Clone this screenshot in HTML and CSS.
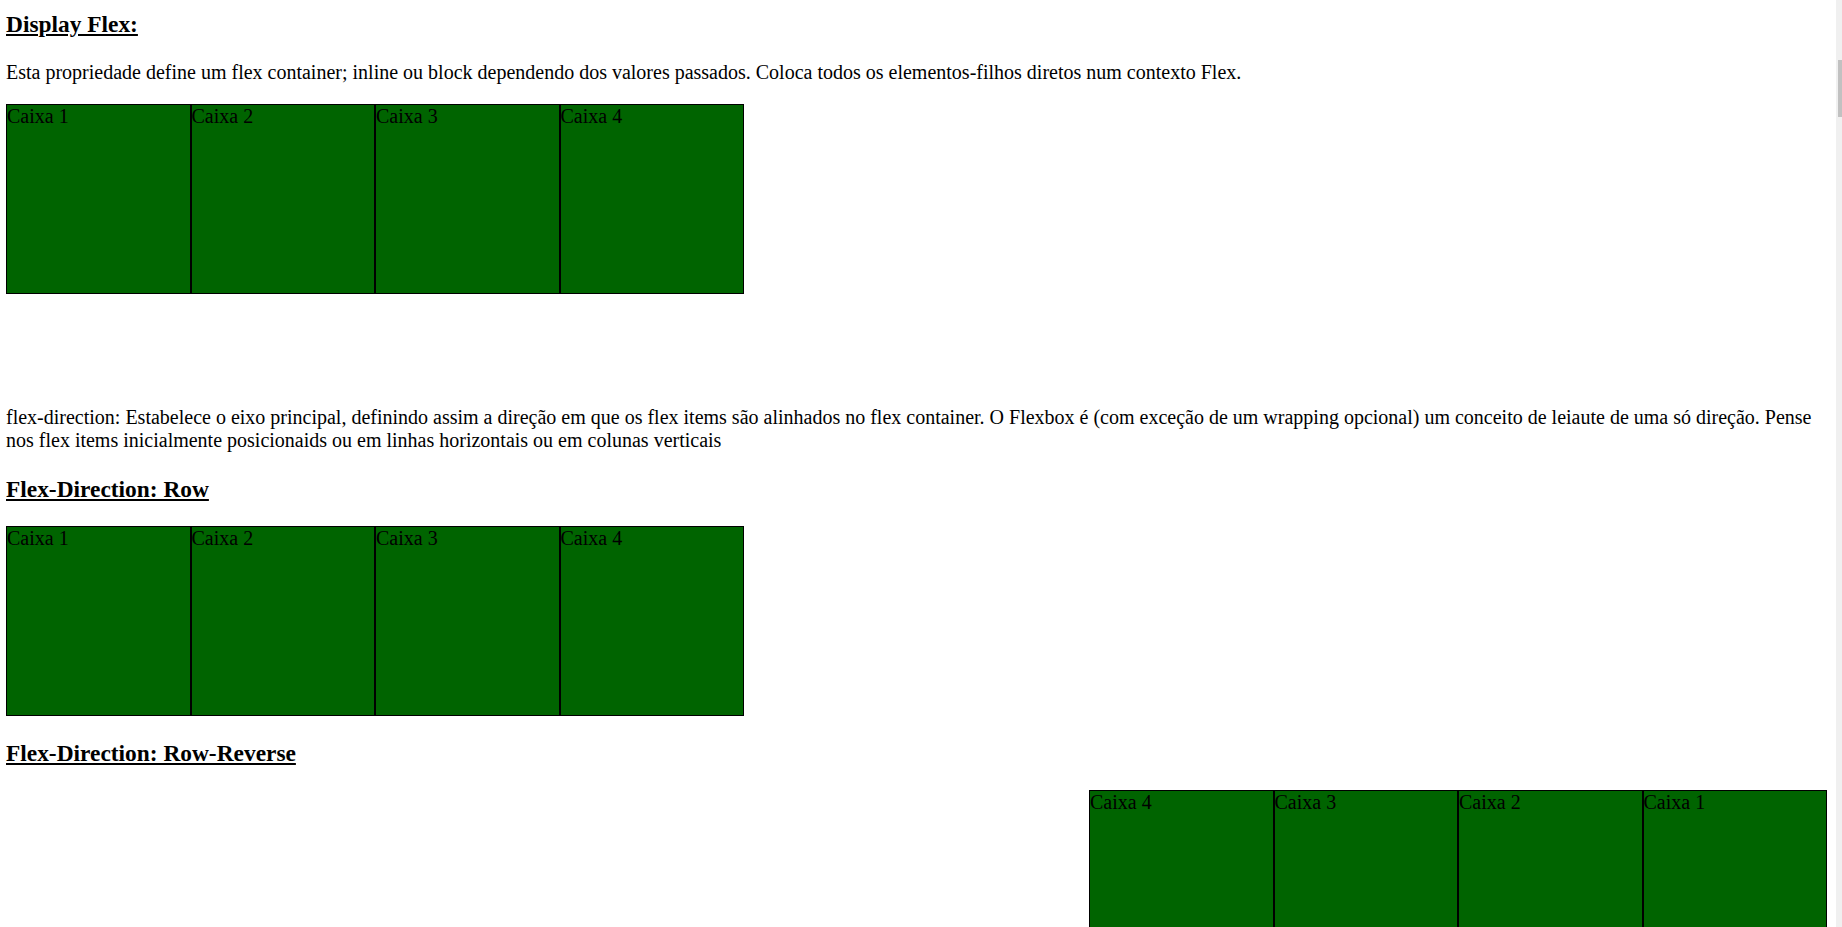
FILE: index.html
```html
<!DOCTYPE html>
<html lang="pt-BR">
<head>
<meta charset="utf-8">
<title>Flexbox</title>
<link rel="stylesheet" href="styles.css">
</head>
<body>
<main class="page">
  <h3 class="titulo">Display Flex:</h3>
  <p class="texto">Esta propriedade define um flex container; inline ou block dependendo dos valores passados. Coloca todos os elementos-filhos diretos num contexto Flex.</p>
  <div class="container">
    <div class="caixa">Caixa 1</div>
    <div class="caixa">Caixa 2</div>
    <div class="caixa">Caixa 3</div>
    <div class="caixa">Caixa 4</div>
  </div>

  <p class="texto texto-separado">flex-direction: Estabelece o eixo principal, definindo assim a direção em que os flex items são alinhados no flex container. O Flexbox é (com exceção de um wrapping opcional) um conceito de leiaute de uma só direção. Pense nos flex items inicialmente posicionaids ou em linhas horizontais ou em colunas verticais</p>

  <h3 class="titulo">Flex-Direction: Row</h3>
  <div class="container">
    <div class="caixa">Caixa 1</div>
    <div class="caixa">Caixa 2</div>
    <div class="caixa">Caixa 3</div>
    <div class="caixa">Caixa 4</div>
  </div>

  <h3 class="titulo">Flex-Direction: Row-Reverse</h3>
  <div class="container container-row-reverse">
    <div class="caixa">Caixa 1</div>
    <div class="caixa">Caixa 2</div>
    <div class="caixa">Caixa 3</div>
    <div class="caixa">Caixa 4</div>
  </div>

  <h3 class="titulo">Flex-Direction: Column</h3>
  <div class="container container-column">
    <div class="caixa">Caixa 1</div>
    <div class="caixa">Caixa 2</div>
    <div class="caixa">Caixa 3</div>
    <div class="caixa">Caixa 4</div>
  </div>

  <h3 class="titulo">Flex-Direction: Column-Reverse</h3>
  <div class="container container-column-reverse">
    <div class="caixa">Caixa 1</div>
    <div class="caixa">Caixa 2</div>
    <div class="caixa">Caixa 3</div>
    <div class="caixa">Caixa 4</div>
  </div>
</main>
<aside class="scrollbar" aria-hidden="true"><div class="scrollbar-thumb"></div></aside>
</body>
</html>
```

FILE: styles.css
```css
html {
  overflow: hidden;
}

body {
  margin: 0;
  background: #ffffff;
  color: #000000;
  font-family: "Liberation Serif", "Times New Roman", serif;
  font-size: 20px;
}

.page {
  padding: 11px 15px 40px 6px;
}

.titulo {
  font-size: 23.4px;
  line-height: 27px;
  font-weight: bold;
  text-decoration: underline;
  margin: 23.4px 0;
}

.page > .titulo:first-child {
  margin-top: 0;
}

.texto {
  line-height: 23px;
  margin: 20px 0;
}

.texto-separado {
  margin-top: 112px;
}

.container {
  display: flex;
  flex-direction: row;
}

.container-row-reverse {
  flex-direction: row-reverse;
}

.container-column {
  flex-direction: column;
}

.container-column-reverse {
  flex-direction: column-reverse;
}

.caixa {
  box-sizing: border-box;
  width: 184.5px;
  height: 190px;
  flex: none;
  border: 1px solid #000000;
  background: #006400;
  color: #000000;
  line-height: 23px;
}

.scrollbar {
  position: fixed;
  top: 0;
  right: 0;
  width: 6px;
  height: 100vh;
  background: #f0f0f0;
}

.scrollbar-thumb {
  margin: 60px 0 0 2px;
  height: 57px;
  background: #c1c1c1;
}
```
